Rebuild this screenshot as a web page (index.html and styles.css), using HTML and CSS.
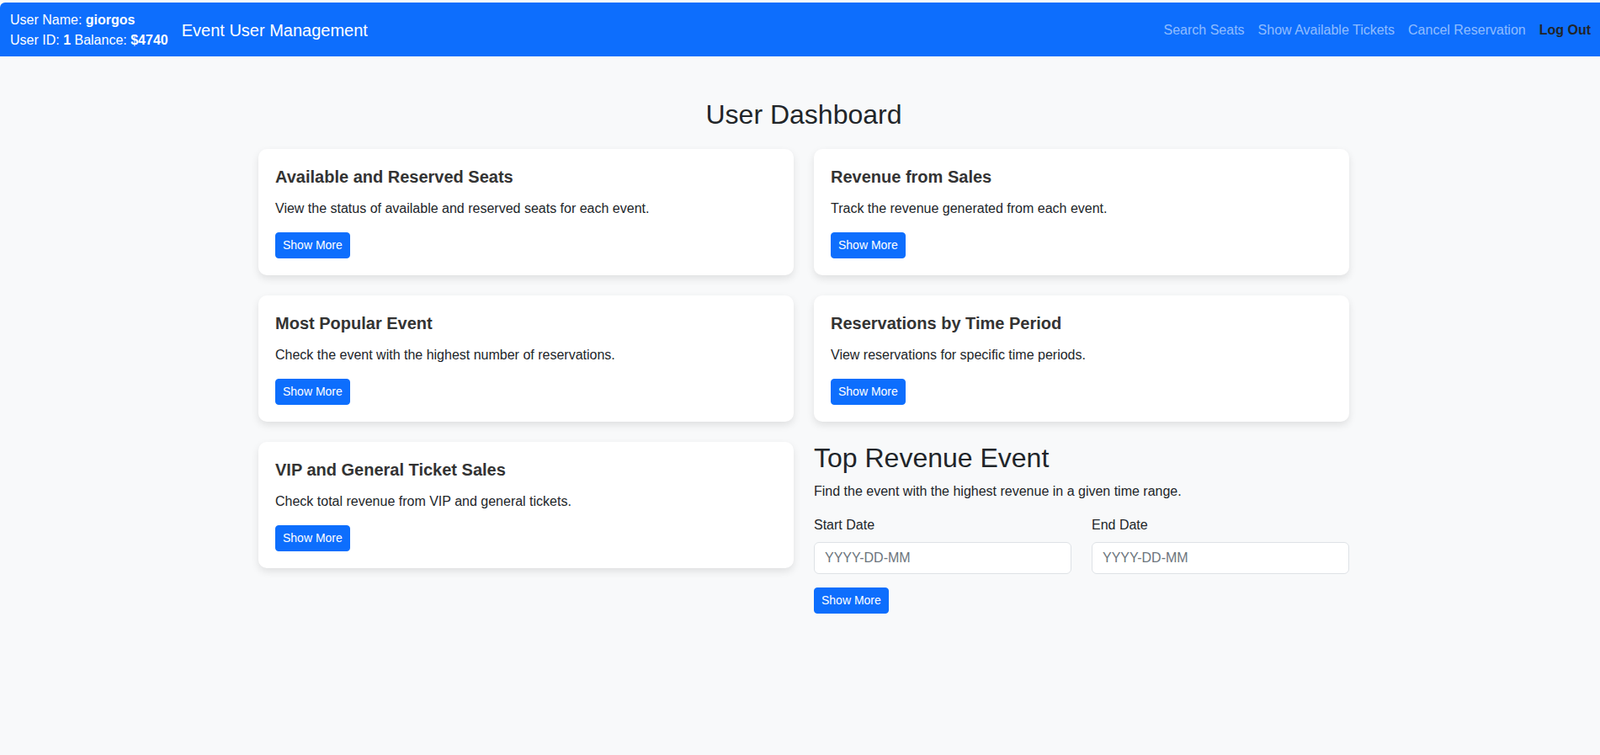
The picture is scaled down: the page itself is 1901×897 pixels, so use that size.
FILE: index.html
```html
<!DOCTYPE html>
<html lang="en">
<head>
<meta charset="utf-8">
<title>User Dashboard</title>
<link rel="stylesheet" href="styles.css">
</head>
<body>
<div class="page">
  <nav class="navbar">
    <div class="user-info">
      <div>User Name: <strong>giorgos</strong></div>
      <div>User ID: <strong>1</strong> Balance: <strong>$4740</strong></div>
    </div>
    <a class="brand" href="#">Event User Management</a>
    <ul class="nav-links">
      <li><a class="nav-link" href="#">Search Seats</a></li>
      <li><a class="nav-link" href="#">Show Available Tickets</a></li>
      <li><a class="nav-link" href="#">Cancel Reservation</a></li>
      <li><a class="nav-link logout" href="#">Log Out</a></li>
    </ul>
  </nav>

  <main class="container">
    <h1 class="page-title">User Dashboard</h1>
    <div class="dash-grid">
      <div class="card">
        <h5 class="card-title">Available and Reserved Seats</h5>
        <p class="card-text">View the status of available and reserved seats for each event.</p>
        <a class="btn" href="#">Show More</a>
      </div>
      <div class="card">
        <h5 class="card-title">Revenue from Sales</h5>
        <p class="card-text">Track the revenue generated from each event.</p>
        <a class="btn" href="#">Show More</a>
      </div>
      <div class="card">
        <h5 class="card-title">Most Popular Event</h5>
        <p class="card-text">Check the event with the highest number of reservations.</p>
        <a class="btn" href="#">Show More</a>
      </div>
      <div class="card">
        <h5 class="card-title">Reservations by Time Period</h5>
        <p class="card-text">View reservations for specific time periods.</p>
        <a class="btn" href="#">Show More</a>
      </div>
      <div class="card">
        <h5 class="card-title">VIP and General Ticket Sales</h5>
        <p class="card-text">Check total revenue from VIP and general tickets.</p>
        <a class="btn" href="#">Show More</a>
      </div>
      <section class="top-revenue">
        <h2 class="section-title">Top Revenue Event</h2>
        <p class="section-text">Find the event with the highest revenue in a given time range.</p>
        <form class="date-form">
          <div class="date-fields">
            <div class="field">
              <label class="field-label" for="start">Start Date</label>
              <input class="field-input" id="start" type="text" placeholder="YYYY-DD-MM">
            </div>
            <div class="field">
              <label class="field-label" for="end">End Date</label>
              <input class="field-input" id="end" type="text" placeholder="YYYY-DD-MM">
            </div>
          </div>
          <button class="btn" type="button">Show More</button>
        </form>
      </section>
    </div>
  </main>
</div>
</body>
</html>
```

FILE: styles.css
```css
* {
  box-sizing: border-box;
}

html, body {
  overflow-x: hidden;
}

body {
  margin: 0;
  background: #f8f9fa;
  color: #212529;
  font-family: "Liberation Sans", Arial, sans-serif;
  font-size: 16px;
  line-height: 1.5;
}

.page {
  width: 1910px;
  padding-top: 3px;
}

/* Navbar */
.navbar {
  display: flex;
  align-items: center;
  height: 64px;
  padding: 8px 12px;
  background: #0d6efd;
  border-radius: 6px 6px 0 0;
  color: #fff;
}

.user-info {
  font-size: 16px;
  line-height: 24px;
  margin-right: 16px;
  padding-top: 1px;
}

.user-info strong {
  font-weight: 700;
}

.brand {
  color: #fff;
  text-decoration: none;
  font-size: 20px;
  line-height: 30px;
  padding-top: 2px;
}

.nav-links {
  display: flex;
  list-style: none;
  margin: 0 0 0 auto;
  padding: 0;
}

.nav-link {
  display: block;
  padding: 9px 8px 7px;
  color: rgba(255, 255, 255, 0.55);
  text-decoration: none;
  font-size: 16px;
  line-height: 24px;
}

.nav-link.logout {
  color: #212529;
  font-weight: 700;
}

/* Main */
.container {
  width: 1296px;
  margin: 48px auto 0;
}

.page-title {
  margin: 0 0 22px;
  padding-top: 2px;
  text-align: center;
  font-size: 32px;
  font-weight: 500;
  line-height: 1.2;
}

.dash-grid {
  display: grid;
  grid-template-columns: 1fr 1fr;
  column-gap: 24px;
  row-gap: 24px;
  align-items: start;
}

.card {
  background: #fff;
  border-radius: 10px;
  padding: 20px;
  box-shadow: 0 4px 10px rgba(0, 0, 0, 0.1);
}

.card-title {
  margin: 0 0 14px;
  padding-top: 1px;
  font-size: 20px;
  font-weight: 700;
  line-height: 24px;
  color: #333;
}

.card-text {
  margin: 0 0 16px;
}

.btn {
  display: inline-block;
  padding: 4px 8px;
  font-family: inherit;
  font-size: 14px;
  line-height: 21px;
  color: #fff;
  background: #0d6efd;
  border: 1px solid #0d6efd;
  border-radius: 4px;
  text-decoration: none;
  cursor: pointer;
}

/* Top revenue form */
.section-title {
  margin: 0 0 8px;
  font-size: 32px;
  font-weight: 500;
  line-height: 1.2;
}

.section-text {
  margin: 0 0 16px;
}

.date-fields {
  display: grid;
  grid-template-columns: 1fr 1fr;
  column-gap: 24px;
  margin-bottom: 16px;
}

.field-label {
  display: block;
  margin-bottom: 8px;
}

.field-input {
  display: block;
  width: 100%;
  height: 38px;
  padding: 6px 12px;
  font-family: inherit;
  font-size: 16px;
  line-height: 24px;
  color: #212529;
  background: #fff;
  border: 1px solid #dee2e6;
  border-radius: 6px;
}

.field-input::placeholder {
  color: #6c757d;
}
```
